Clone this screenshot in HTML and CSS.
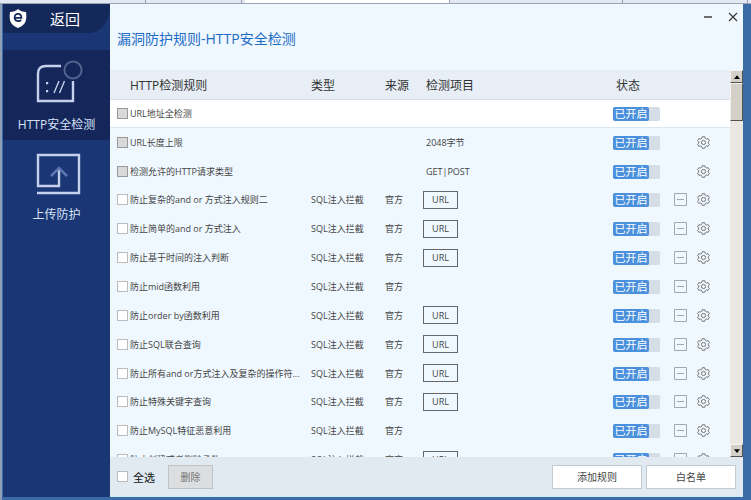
FILE: index.html
```html
<!DOCTYPE html>
<html lang="zh-CN">
<head>
  <meta charset="UTF-8" />
  <meta name="viewport" content="width=device-width, initial-scale=1.0" />
  <title>漏洞防护规则-HTTP安全检测</title>
  <link rel="stylesheet" href="styles.css">
</head>
<body>
  <div class="tabs">
    <span class="tab tab-short"></span>
    <span class="tab tab-medium"></span>
    <span class="tab tab-active"></span>
    <span class="tab tab-long"></span>
    <span class="tab tab-rest"></span>
  </div>

  <div class="window">
    <aside class="sidebar">
      <div class="brand">
        <svg class="shield" viewBox="0 0 18 21" aria-hidden="true">
          <path d="M9 1 C7 3 4 4 1 4 C0 12 1 17 9 20 C17 17 18 12 17 4 C14 4 11 3 9 1 Z" fill="#fff"/>
          <path d="M5.6 9.8 H12.4 C12.4 4.6 5.6 4.6 5.6 9.4 C5.6 13.4 10 13.8 12.2 12" fill="none" stroke="#14285a" stroke-width="1.7"/>
        </svg>
        <button class="back" type="button">返回</button>
      </div>
      <nav>
        <a href="#http" class="nav-item active">
          <svg class="nav-icon" viewBox="-2 0 46 46" fill="none" aria-hidden="true">
            <path d="M25 6 H10 Q2 6 2 14 V41 H37 V21" stroke="#c5d1ec" stroke-width="2.4"/>
            <circle cx="37" cy="10" r="8.6" stroke="#52628f" stroke-width="2"/>
            <path d="M23 21 L18 33 M28.5 21 L23.5 33" stroke="#c5d1ec" stroke-width="1.4"/>
            <path d="M10 22 h2.2 v2.2 h-2.2 z M10 30 h2.2 v2.2 h-2.2 z" fill="#c5d1ec"/>
          </svg>
          <span>HTTP安全检测</span>
        </a>
        <a href="#upload" class="nav-item">
          <svg class="nav-icon" viewBox="-2 0 46 46" fill="none" aria-hidden="true">
            <path d="M23 19 V36 H2 V5 H43 V43 H1" stroke="#c5d1ec" stroke-width="2.4"/>
            <path d="M15 26 L23 18 L31 26" stroke="#5f75ae" stroke-width="2.6"/>
          </svg>
          <span>上传防护</span>
        </a>
      </nav>
    </aside>

    <div class="content">
      <header>
        <h1>漏洞防护规则-HTTP安全检测</h1>
        <div class="window-buttons">
          <button type="button" aria-label="最小化">
            <svg viewBox="0 0 10 10"><path d="M1 5 H9" stroke="#333" stroke-width="1.4"/></svg>
          </button>
          <button type="button" aria-label="关闭">
            <svg viewBox="0 0 10 10"><path d="M1 1 L9 9 M9 1 L1 9" stroke="#333" stroke-width="1.1"/></svg>
          </button>
        </div>
      </header>

      <main>
        <div class="list">
          <table>
            <colgroup>
              <col class="col-name"><col class="col-type"><col class="col-source">
              <col><col class="col-state"><col class="col-actions">
            </colgroup>
            <thead>
              <tr>
                <th class="first">HTTP检测规则</th>
                <th>类型</th>
                <th>来源</th>
                <th>检测项目</th>
                <th class="state-head">状态</th>
                <th></th>
              </tr>
            </thead>
            <tbody id="rules"></tbody>
          </table>
        </div>
        <div class="scrollbar">
          <button type="button" class="scroll-button" aria-label="向上">
            <svg viewBox="0 0 8 5"><path d="M4 0 L8 5 H0 Z"/></svg>
          </button>
          <div class="thumb"></div>
          <button type="button" class="scroll-button" aria-label="向下">
            <svg viewBox="0 0 8 5"><path d="M0 0 H8 L4 5 Z"/></svg>
          </button>
        </div>
      </main>

      <footer>
        <label class="select-all"><input type="checkbox" class="check"> 全选</label>
        <button type="button" class="delete">删除</button>
        <button type="button" class="action push">添加规则</button>
        <button type="button" class="action">白名单</button>
      </footer>
    </div>
  </div>

  <script src="script.js"></script>
</body>
</html>
```
FILE: script.js
```js
const rules = [
  { name: "URL地址全检测", fixed: true, noSettings: true },
  { name: "URL长度上限", fixed: true, item: "2048字节" },
  { name: "检测允许的HTTP请求类型", fixed: true, item: "GET|POST" },
  { name: "防止复杂的and or 方式注入规则二", url: true },
  { name: "防止简单的and or 方式注入", url: true },
  { name: "防止基于时间的注入判断", url: true },
  { name: "防止mid函数利用" },
  { name: "防止order by函数利用", url: true },
  { name: "防止SQL联合查询", url: true },
  { name: "防止所有and or方式注入及复杂的操作符...", url: true },
  { name: "防止特殊关键字查询", url: true },
  { name: "防止MySQL特征恶意利用" },
  { name: "防止创建或者删除函数", url: true }
];

const removeButton = `
  <button type="button" class="icon-button" aria-label="移除">
    <svg viewBox="0 0 13 13" fill="none" stroke="#a5a8ab"><path d="M.5 .5 H12.5 V12.5 H.5 Z M3 6.5 H10"/></svg>
  </button>`;

const settingsButton = `
  <button type="button" class="icon-button settings" aria-label="设置">
    <svg viewBox="0 0 13 13" fill="none" stroke="#777" stroke-linejoin="round">
      <path d="M5.3 .7 H7.7 L8.2 2.3 L9.5 3 L11.2 2.7 L12.4 4.7 L11.3 5.9 V7.1 L12.4 8.3 L11.2 10.3 L9.5 10 L8.2 10.7 L7.7 12.3 H5.3 L4.8 10.7 L3.5 10 L1.8 10.3 L.6 8.3 L1.7 7.1 V5.9 L.6 4.7 L1.8 2.7 L3.5 3 L4.8 2.3 Z"/>
      <circle cx="6.5" cy="6.5" r="2.1"/>
    </svg>
  </button>`;

const body = document.getElementById("rules");

rules.forEach((rule, index) => {
  const row = document.createElement("tr");
  const item = rule.url ? `<button type="button" class="url">URL</button>` : (rule.item || "");
  row.innerHTML = `
    <td><label class="rule"><input type="checkbox" class="check" ${rule.fixed ? "disabled" : ""}>${rule.name}</label></td>
    <td>${rule.fixed ? "" : "SQL注入拦截"}</td>
    <td>${rule.fixed ? "" : "官方"}</td>
    <td>${item}</td>
    <td><label class="toggle"><input type="checkbox" role="switch" id="state-${index}" checked><span>已开启</span></label></td>
    <td><div class="actions">${rule.fixed ? "" : removeButton}${rule.noSettings ? "" : settingsButton}</div></td>
  `;
  body.appendChild(row);
});
```
FILE: styles.css
```css
* {
  box-sizing: border-box;
}
body {
  margin: 0;
  height: 100vh;
  display: flex;
  flex-direction: column;
  padding: 0 8px 3px 3px;
  background: linear-gradient(to right, #8f9fb5 2px, #3b6ca8 2px);
  font-family: "Open Sans", "Noto Sans CJK SC", sans-serif;
  font-size: 9px;
  color: #444;
  overflow: hidden;
}
button {
  font: inherit;
  color: inherit;
  padding: 0;
  border: none;
  background: none;
  cursor: pointer;
}
svg {
  display: block;
}
.tabs {
  display: flex;
  flex: none;
  height: 4px;
  margin: 0 -8px 0 -3px;
  border-bottom: 1px solid #9aa4b8;
  background: #e4e8f0;
}
.tab {
  border-right: 1px solid #9a9fb0;
  margin-right: 3px;
}
.tab-short {
  width: 146px;
}
.tab-medium {
  width: 93px;
}
.tab-active {
  width: 205px;
  background: #fff;
}
.tab-long {
  width: 170px;
}
.tab-rest {
  flex: 1;
}
.window {
  flex: 1;
  min-height: 0;
  display: flex;
  background: #f0f8ff;
}
.sidebar {
  width: 107px;
  flex: none;
  background: #1a3674;
  color: #d8e2f7;
}
.brand {
  display: flex;
  align-items: center;
  height: 29px;
  margin-bottom: 17px;
  padding-left: 6px;
  background: #14285a;
  border-bottom-right-radius: 20px 28px;
}
.shield {
  width: 18px;
  height: 21px;
}
.back {
  margin-left: 23px;
  font-size: 15px;
  color: #fff;
}
.nav-item {
  display: flex;
  flex-direction: column;
  align-items: center;
  height: 90px;
  padding-top: 10px;
  font-size: 12px;
  line-height: 18px;
  color: inherit;
  text-decoration: none;
}
.nav-item.active {
  background: #14265a;
}
.nav-icon {
  width: 46px;
  height: 46px;
  margin-bottom: 10px;
  overflow: visible;
}
.content {
  flex: 1;
  min-width: 0;
  display: flex;
  flex-direction: column;
}
header {
  display: flex;
  justify-content: space-between;
  flex: none;
  height: 66px;
}
h1 {
  margin: 24px 0 0 7px;
  font-size: 14px;
  line-height: 22px;
  font-weight: normal;
  color: #1b6bc4;
}
.window-buttons {
  display: flex;
  align-items: flex-start;
  gap: 15px;
  padding: 8px 5px 0 0;
}
.window-buttons svg {
  width: 10px;
  height: 10px;
}
main {
  flex: 1;
  min-height: 0;
  display: flex;
}
.list {
  flex: 1;
  min-width: 0;
  overflow: hidden;
}
table {
  width: 100%;
  height: 404px;
  table-layout: fixed;
  border-collapse: collapse;
}
.col-name {
  width: 201px;
}
.col-type {
  width: 74px;
}
.col-source {
  width: 41px;
}
.col-state {
  width: 61px;
}
.col-actions {
  width: 56px;
}
th, td {
  height: 28px;
  padding: 0;
  text-align: left;
  white-space: nowrap;
}
th {
  height: 29px;
  padding-top: 2px;
  background: #e7eef5;
  border-bottom: 1px solid #d5e2ec;
  font-size: 12px;
  font-weight: normal;
  color: #333;
}
th.first {
  padding-left: 20px;
}
th.state-head {
  padding-left: 3px;
}
tbody tr:first-child {
  background: #fff;
  border-bottom: 1px solid #dbe8f2;
}
.rule {
  display: flex;
  align-items: center;
  gap: 2px;
  padding-left: 7px;
}
.check {
  appearance: none;
  flex: none;
  width: 11px;
  height: 11px;
  margin: 0;
  border: 1px solid #bbb;
  background: #fff;
}
.check:disabled {
  border-color: #999;
  background: #d9d9d9;
}
.check:checked {
  background: #4a90dc;
}
.url {
  display: block;
  width: 35px;
  height: 18px;
  margin-left: -3px;
  border: 1px solid #666;
}
.toggle {
  display: block;
  width: 47px;
  height: 14px;
  margin-top: 1px;
  border-radius: 2px;
  background: #d5dee6;
}
.toggle input {
  position: absolute;
  opacity: 0;
}
.toggle span {
  display: block;
  width: 36px;
  border-radius: 2px;
  background: #4a90dc;
  color: #fff;
  font-size: 11px;
  line-height: 14px;
  text-align: center;
}
.actions {
  display: flex;
}
.icon-button {
  width: 13px;
  height: 13px;
}
.settings {
  margin-left: auto;
  margin-right: 20px;
}
.scrollbar {
  display: flex;
  flex-direction: column;
  width: 13px;
  background: #ebe8e3;
}
.scroll-button, .thumb {
  flex: none;
  border: 1px solid;
  border-color: #f4f2ee #55524d #55524d #f4f2ee;
  background: #d4d0c8;
}
.scroll-button {
  display: flex;
  align-items: center;
  justify-content: center;
  height: 13px;
}
.scroll-button:last-child {
  margin-top: auto;
}
.scroll-button svg {
  width: 6px;
  height: 4px;
}
.thumb {
  height: 38px;
}
footer {
  display: flex;
  align-items: center;
  gap: 4px;
  flex: none;
  height: 40px;
  padding: 0 7px 0 7px;
  background: #e1eaf1;
  border-bottom: 1px solid #cfeaf5;
}
.select-all {
  display: flex;
  align-items: center;
  gap: 5px;
  margin-right: 9px;
  font-size: 11px;
  color: #111;
}
.delete {
  width: 45px;
  height: 24px;
  border: 1px solid #bfc3c6;
  background: #dcdedf;
  font-size: 10px;
  color: #777;
}
.action {
  width: 90px;
  height: 24px;
  border: 1px solid #c3cbd2;
  background: #fff;
  font-size: 10px;
}
.push {
  margin-left: auto;
}
```
